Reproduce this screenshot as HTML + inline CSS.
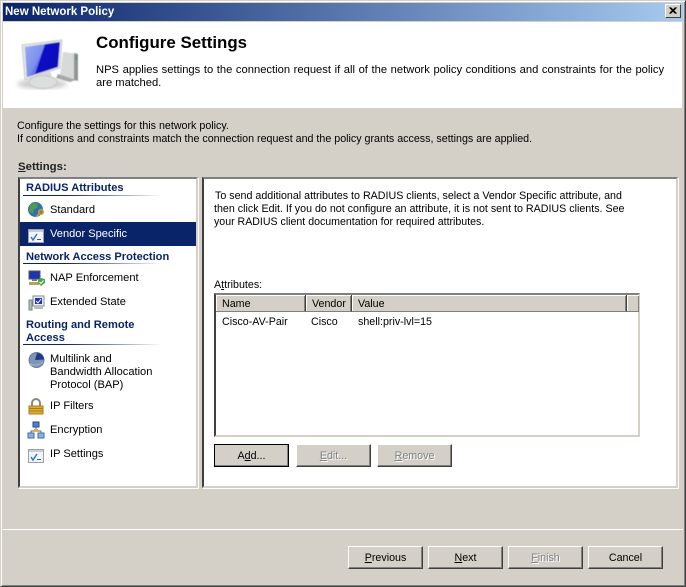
<!DOCTYPE html>
<html><head><meta charset="utf-8"><style>
html,body{margin:0;padding:0;background:#d4d0c8}
#w{position:relative;width:686px;height:587px;overflow:hidden;background:#d4d0c8;font:10.7px/13px "Liberation Sans",sans-serif;color:#000}
#w div,#w svg{position:absolute}
.t{white-space:nowrap}
.m{white-space:nowrap;font-size:11.1px;left:50px}
.h{color:#0a246a;font-weight:bold;white-space:nowrap;left:26px;font-size:11.1px}
.r{height:1px;left:23px;width:140px;background:linear-gradient(90deg,#0a246a,#0a246a 30%,#fff)}
.b{width:75px;height:23px;background:#d4d0c8;box-sizing:border-box;border:1px solid;border-color:#fff #404040 #404040 #fff;box-shadow:inset -1px -1px 0 #808080;text-align:center;line-height:23px}
.d{color:#808080;text-shadow:1px 1px 0 #fff}
u{text-underline-offset:1px}
.c{top:295px;height:17px;background:#d4d0c8;box-sizing:border-box;border-right:1px solid #404040;border-bottom:1px solid #808080;box-shadow:inset 1px 1px 0 #fff,inset -1px 0 0 #808080;line-height:18px;padding-left:6px}
</style></head><body><div id="w">
<div style="left:0;top:0;width:686px;height:587px;box-sizing:border-box;border:1px solid;border-color:#d4d0c8 #404040 #404040 #d4d0c8;box-shadow:inset 1px 1px 0 #fff,inset -1px -1px 0 #808080"></div>
<div style="left:3px;top:3px;width:680px;height:18px;background:linear-gradient(90deg,#0a246a,#a6caf0)"></div>
<div class="t" style="left:5px;top:6px;color:#fff;font-weight:bold;font-size:11.5px">New Network Policy</div>
<div style="left:665px;top:4px;width:16px;height:14px;box-sizing:border-box;background:#d4d0c8;border:1px solid;border-color:#fff #404040 #404040 #fff"></div>
<svg style="left:665px;top:4px" width="16" height="14"><path d="M4.500 3.500L10.500 9.500M5.500 3.500L11.500 9.500M10.500 3.500L4.500 9.500M11.500 3.500L5.500 9.500" stroke="#000" fill="none"/></svg>
<div style="left:3px;top:22px;width:679px;height:86px;background:#fff"></div>
<svg style="left:0;top:0" width="90" height="100" viewBox="0 0 90 100">
<defs><linearGradient id="s" x1="0" y1="0" x2="1" y2="0.5"><stop offset="0" stop-color="#6f8cf0"/><stop offset=".48" stop-color="#2a48e0"/><stop offset=".52" stop-color="#0808c8"/><stop offset="1" stop-color="#0a12b8"/></linearGradient><filter id="f"><feGaussianBlur stdDeviation=".5"/></filter><filter id="g"><feGaussianBlur stdDeviation="2"/></filter></defs>
<ellipse cx="42" cy="84" rx="25" ry="5" fill="#cfcfcf" filter="url(#g)"/>
<g filter="url(#f)">
<path d="M63 52L78 54L78 81L60 77Z" fill="#d8dada"/><path d="M74 53L78 54V81L74 80Z" fill="#8f9692"/><rect x="75.500" y="55" width="1.500" height="5" fill="#5f8f70"/>
<path d="M22 45L62 40L60 68L25 80Z" fill="#e4e6e6" stroke="#c8cccc"/>
<path d="M25 47L60 42L58 67L27 77Z" fill="url(#s)"/>
<path d="M25 47L45 44L35 74L27 77Z" fill="#b4c2f4" opacity=".6"/>
<path d="M36 74L50 70L52 78L36 80Z" fill="#d6d8d8"/>
<ellipse cx="43" cy="82" rx="14" ry="6.500" fill="#dcdede" stroke="#c4c6c6"/>
<path d="M58 74L76 80L70 82L56 78Z" fill="#a4a8a8"/>
</g></svg>
<div class="t" style="left:96px;top:33px;font-weight:bold;font-size:16.900px;line-height:19px">Configure Settings</div>
<div class="t" style="left:96px;top:64px;font-size:11.2px;word-spacing:.5px">NPS applies settings to the connection request if all of the network policy conditions and constraints for the policy</div>
<div class="t" style="left:96px;top:77px;font-size:11.2px">are matched.</div>
<div class="t" style="left:17px;top:120px">Configure the settings for this network policy.</div>
<div class="t" style="left:17px;top:133px">If conditions and constraints match the connection request and the policy grants access, settings are applied.</div>
<div class="t" style="left:18px;top:161px;font-weight:bold;font-size:11.4px;color:#222"><u>S</u>ettings:</div>

<div style="left:18px;top:177px;width:180px;height:311px;box-sizing:border-box;background:#fff;border:2px solid;border-color:#808080 #d4d0c8 #d4d0c8 #404040;box-shadow:1px 1px 0 #fff"></div>
<div style="left:202px;top:177px;width:476px;height:311px;box-sizing:border-box;background:#fff;border:2px solid;border-color:#808080 #d4d0c8 #d4d0c8 #404040;box-shadow:1px 1px 0 #fff"></div>

<div class="h" style="top:182px">RADIUS Attributes</div><div class="r" style="top:195px"></div>
<div style="left:20px;top:222px;width:176px;height:24px;background:#0a246a"></div>
<div class="m" style="top:204px">Standard</div>
<div class="m" style="top:228px;color:#fff">Vendor Specific</div>
<div class="h" style="top:251px">Network Access Protection</div><div class="r" style="top:263px"></div>
<div class="m" style="top:272px">NAP Enforcement</div>
<div class="m" style="top:296px">Extended State</div>
<div class="h" style="top:319px">Routing and Remote</div>
<div class="h" style="top:332px">Access</div><div class="r" style="top:344px"></div>
<div class="m" style="top:353px">Multilink and</div>
<div class="m" style="top:366px">Bandwidth Allocation</div>
<div class="m" style="top:379px">Protocol (BAP)</div>
<div class="m" style="top:400px">IP Filters</div>
<div class="m" style="top:424px">Encryption</div>
<div class="m" style="top:448px">IP Settings</div>

<svg style="left:27px;top:201px" width="18" height="18"><circle cx="8.500" cy="8.500" r="7.500" fill="#2f6fb8"/><path d="M3 4Q7 1 11 3L10 7L7 8L6 13L2 10Z M11 10L15 7L15 11L11 15Z" fill="#4e9e45"/><circle cx="14" cy="11" r="2.200" fill="none" stroke="#d9982a" stroke-width="1.500"/><path d="M12.500 12.500L9 16" stroke="#d9982a" stroke-width="1.600"/></svg>
<svg style="left:28px;top:229px" width="16" height="14"><rect x=".5" y=".5" width="15" height="13" fill="#f2f4f8" stroke="#9aa0a8"/><rect x="1" y="1" width="14" height="2" fill="#c8ccd4"/><path d="M3 8L5 11L9 5" stroke="#2a7ad8" stroke-width="1.500" fill="none"/><path d="M9 10.500H13" stroke="#555"/></svg>
<svg style="left:28px;top:270px" width="18" height="17"><rect x="1" y="1" width="11" height="8" fill="#1c34b0" stroke="#555"/><rect x="4" y="9" width="5" height="2" fill="#777"/><rect x="1" y="12" width="10" height="3" fill="#b8a060"/><path d="M10 9L13 8L17 9V13L13 16L10 13Z" fill="#4aa84a"/><path d="M11.500 12L13 13.500L15.500 10.500" stroke="#fff" fill="none"/></svg>
<svg style="left:28px;top:295px" width="18" height="17"><rect x="1" y="5" width="3" height="10" fill="#b0c0b0" stroke="#788"/><rect x="5" y="1" width="11" height="10" fill="#eef" stroke="#889"/><rect x="7" y="3" width="7" height="6" fill="#1c34c0"/><path d="M8 6L10 8L13 4" stroke="#fff" fill="none"/><rect x="6" y="11" width="9" height="3" fill="#bbb"/></svg>
<svg style="left:28px;top:352px" width="18" height="16"><circle cx="8.500" cy="8" r="7.500" fill="#7e94b8" stroke="#6a7c98"/><path d="M9 1A7 7 0 0 1 16 7.500L7 8Z" fill="#1c3a8c"/><path d="M2 12Q8 15 15 10" stroke="#a8b6cc" fill="none"/></svg>
<svg style="left:28px;top:398px" width="16" height="17"><path d="M4 8V5A4 4 0 0 1 12 5V8" fill="none" stroke="#8a8a78" stroke-width="2"/><rect x="1" y="8" width="14" height="8" fill="#e0ac30" stroke="#a87c20"/><path d="M1 10.500H15M1 13H15" stroke="#a87c20"/></svg>
<svg style="left:27px;top:421px" width="18" height="18"><path d="M9 5V11M4 13V10H14V13" stroke="#667" fill="none"/><rect x="6" y="1" width="6" height="5" fill="#4a80d8" stroke="#2a4a90"/><rect x="1" y="12" width="6" height="5" fill="#8ab0e8" stroke="#4a6aa0"/><rect x="11" y="12" width="6" height="5" fill="#8ab0e8" stroke="#4a6aa0"/><rect x="7" y="8" width="4" height="3" fill="#e8b030"/></svg>
<svg style="left:28px;top:449px" width="16" height="14"><rect x=".5" y=".5" width="15" height="13" fill="#f2f4f8" stroke="#9aa0a8"/><rect x="1" y="1" width="14" height="2" fill="#c8ccd4"/><path d="M3 8L5 11L9 5" stroke="#2a7ad8" stroke-width="1.500" fill="none"/><path d="M9 10.500H13" stroke="#555"/></svg>

<div class="t" style="left:215px;top:190px">To send additional attributes to RADIUS clients, select a Vendor Specific attribute, and</div>
<div class="t" style="left:214px;top:203px">then click Edit. If you do not configure an attribute, it is not sent to RADIUS clients. See</div>
<div class="t" style="left:214px;top:216px;font-size:10.6px">your RADIUS client documentation for required attributes.</div>
<div class="t" style="left:214px;top:279px">A<u>t</u>tributes:</div>

<div style="left:214px;top:293px;width:426px;height:144px;box-sizing:border-box;background:#fff;border:2px solid;border-color:#808080 #d4d0c8 #d4d0c8 #404040"></div>
<div class="c" style="left:216px;width:90px">Name</div>
<div class="c" style="left:306px;width:46px;padding-left:6px">Vendor</div>
<div class="c" style="left:352px;width:275px;padding-left:6px">Value</div>
<div class="c" style="left:627px;width:12px;padding:0;border-right:0"></div>
<div class="t" style="left:222px;top:316px">Cisco-AV-Pair</div>
<div class="t" style="left:311px;top:316px">Cisco</div>
<div class="t" style="left:358px;top:316px">shell:priv-lvl=15</div>

<div class="b" style="left:214px;top:444px;outline:1px solid #000;outline-offset:-1px"><span>A<u>d</u>d...</span></div>
<div class="b d" style="left:296px;top:444px"><u>E</u>dit...</div>
<div class="b d" style="left:377px;top:444px"><u>R</u>emove</div>

<div style="left:3px;top:529px;width:680px;height:1px;background:#fff"></div>
<div class="b" style="left:348px;top:546px"><u>P</u>revious</div>
<div class="b" style="left:428px;top:546px"><u>N</u>ext</div>
<div class="b d" style="left:508px;top:546px"><u>F</u>inish</div>
<div class="b" style="left:588px;top:546px">Cancel</div>
</div></body></html>
